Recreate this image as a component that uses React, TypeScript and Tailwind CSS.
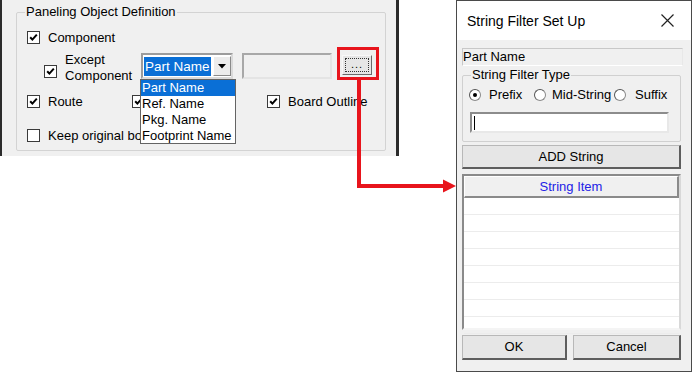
import React from "react";

function Check({ checked = true }: { checked?: boolean }) {
  return (
    <span className="inline-flex w-[13px] h-[13px] shrink-0 items-center justify-center border border-[#3a3a3a] bg-white">
      {checked && (
        <svg width="9" height="9" viewBox="0 0 9 9">
          <path d="M1.2 4.2 L3.4 6.6 L7.8 1.6" stroke="#000" strokeWidth="2" fill="none" />
        </svg>
      )}
    </span>
  );
}

function Radio({ checked = false }: { checked?: boolean }) {
  return (
    <span className="inline-flex w-[12px] h-[12px] shrink-0 items-center justify-center rounded-full border border-[#8a8a8a] border-t-[#555] border-l-[#555] bg-white">
      {checked && <span className="w-[4px] h-[4px] rounded-full bg-black" />}
    </span>
  );
}

export default function App() {
  return (
    <div className="relative w-[693px] h-[374px] bg-white overflow-hidden font-['Liberation_Sans',Arial,sans-serif] text-[13px] text-black flex items-start">
      {/* Left panel */}
      <div className="w-[399px] h-[156px] shrink-0 bg-[#f0f0f0] border-l-2 border-r-[3px] border-[#2b2b2b] pt-[12px] pl-[14px]">
        <div className="relative w-[370px] h-[139px] border border-[#d3d3d3] rounded-[2px]">
          <span className="absolute -top-[9px] left-[8px] bg-[#f0f0f0] px-[1px] leading-[16px]">Paneling Object Definition</span>
          <div className="flex flex-col pl-[10px] pt-[18px]">
            {/* Row 1 */}
            <div className="flex items-center h-[13px]">
              <Check />
              <span className="ml-[8px] leading-[16px]">Component</span>
            </div>
            {/* Row 2 */}
            <div className="flex items-start h-[26px] mt-[9px] pl-[17px]">
              <div className="mt-[9px]"><Check /></div>
              <div className="ml-[8px] w-[76px] -mt-[1px] leading-[16px]">
                <div>Except</div>
                <div>Component</div>
              </div>
              {/* Combo */}
              <div className="relative w-[92px] h-[26px] border-2 border-[#9c9c9c] border-b-[#dadada] border-r-[#dadada] bg-white flex items-center">
                <span className="ml-[1px] h-[19px] px-[1px] bg-[#0a6fd6] text-white leading-[19px] text-[13.5px]">Part Name</span>
                <span className="ml-auto w-[18px] h-[20px] bg-[#ececec] border border-[#fff] border-b-[#8a8a8a] border-r-[#8a8a8a] flex items-center justify-center">
                  <svg width="8" height="5" viewBox="0 0 8 5"><path d="M0 0 H8 L4 4.5 Z" fill="#000" /></svg>
                </span>
                {/* Dropdown list */}
                <div className="absolute left-[-3px] top-[24px] w-[96px] border border-[#646464] bg-white flex flex-col z-10 leading-[15.5px] text-[13px]">
                  <div className="bg-[#0a6fd6] text-white pl-[1px] h-[16px]">Part Name</div>
                  <div className="pl-[1px] h-[16px]">Ref. Name</div>
                  <div className="pl-[1px] h-[16px]">Pkg. Name</div>
                  <div className="pl-[1px] h-[15px]">Footprint Name</div>
                </div>
              </div>
              {/* Text field */}
              <div className="ml-[9px] w-[90px] h-[26px] border-2 border-[#a8a8a8] border-b-[#e4e4e4] border-r-[#e4e4e4] bg-[#f0f0f0]" />
              {/* ... button */}
              <div className="relative ml-[10px] mt-[2px] w-[30px] h-[20px]">
                <div className="w-full h-full bg-[#e6e6e6] border border-[#f8f8f8] border-b-[#6a6a6a] border-r-[#6a6a6a] p-[2px]">
                  <div className="w-full h-full border border-dotted border-[#333] flex items-center justify-center leading-none text-[11px] tracking-[1px] pb-[1px]">...</div>
                </div>
                <div className="absolute left-[-5px] top-[-8px] w-[42px] h-[33px] border-[3px] border-[#e8141c]" />
              </div>
            </div>
            {/* Row 3 */}
            <div className="flex items-center h-[13px] mt-[16px]">
              <div className="w-[105px] flex items-center">
                <Check />
                <span className="ml-[8px] leading-[16px]">Route</span>
              </div>
              <div className="w-[135px] flex items-center">
                <Check />
              </div>
              <div className="flex items-center">
                <Check />
                <span className="ml-[8px] leading-[16px]">Board Outline</span>
              </div>
            </div>
            {/* Row 4 */}
            <div className="flex items-center h-[13px] mt-[21px]">
              <Check checked={false} />
              <span className="ml-[8px] w-[92px] overflow-hidden whitespace-nowrap leading-[16px]">Keep original board</span>
            </div>
          </div>
        </div>
      </div>

      {/* Dialog */}
      <div className="ml-[57px] w-[236px] h-[372px] shrink-0 border border-[#4a4a4a] bg-[#f0f0f0] flex flex-col">
        <div className="h-[39px] bg-white flex items-center pl-[10px] pr-[17px]">
          <span className="text-[14px] leading-[18px]">String Filter Set Up</span>
          <svg className="ml-auto" width="13" height="13" viewBox="0 0 13 13">
            <path d="M0.5 0.5 L12.5 12.5 M12.5 0.5 L0.5 12.5" stroke="#222" strokeWidth="1.2" />
          </svg>
        </div>
        <div className="flex flex-col pl-[5px] pr-[9px]">
          <div className="mt-[8px] w-[221px] h-[18px] border border-[#c8c8c8] border-b-white border-r-[#e8e8e8] leading-[16px] text-[13px]">Part Name</div>
          {/* Group */}
          <div className="relative mt-[9px] w-[219px] h-[67px] border border-[#d0d0d0] rounded-[2px] flex flex-col">
            <span className="absolute -top-[9px] left-[8px] bg-[#f0f0f0] px-[1px] leading-[16px]">String Filter Type</span>
            <div className="flex items-center mt-[12px] pl-[6px] h-[13px]">
              <div className="w-[65px] flex items-center">
                <Radio checked />
                <span className="ml-[8px] leading-[16px]">Prefix</span>
              </div>
              <div className="w-[80px] flex items-center">
                <Radio />
                <span className="ml-[6px] leading-[16px]">Mid-String</span>
              </div>
              <div className="flex items-center">
                <Radio />
                <span className="ml-[9px] leading-[16px]">Suffix</span>
              </div>
            </div>
            <div className="mt-[11px] ml-[7px] w-[199px] h-[21px] border-2 border-[#8c8c8c] border-b-[#e8e8e8] border-r-[#e8e8e8] bg-white flex items-center pl-[2px]">
              <span className="w-[1px] h-[14px] bg-black" />
            </div>
          </div>
          {/* ADD String */}
          <div className="mt-[3px] w-[219px] h-[24px] bg-[#e6e6e6] border border-[#b8b8b8] border-b-2 border-r-2 border-b-[#5e5e5e] border-r-[#5e5e5e] flex items-center justify-center leading-[16px]">ADD String</div>
          {/* List */}
          <div className="mt-[5px] w-[219px] h-[156px] border-2 border-[#8a8a8a] border-b-[#f4f4f4] border-r-[#d8d8d8] bg-white flex flex-col">
            <div className="h-[22px] shrink-0 bg-[#f0f0f0] border-b-2 border-r-2 border-[#8a8a8a] border-t border-l border-t-white border-l-white flex items-center justify-center text-[#2323e6] leading-[16px]">String Item</div>
            {Array.from({ length: 8 }).map((_, i) => (
              <div key={i} className="h-[17px] shrink-0 border-b border-[#ececec]" />
            ))}
          </div>
          {/* OK / Cancel */}
          <div className="mt-[5px] flex gap-[6px]">
            <div className="w-[105px] h-[25px] bg-[#e6e6e6] border border-[#b8b8b8] border-b-2 border-r-2 border-b-[#5e5e5e] border-r-[#5e5e5e] flex items-center justify-center leading-[16px]">OK</div>
            <div className="w-[108px] h-[25px] bg-[#e6e6e6] border border-[#b8b8b8] border-b-2 border-r-2 border-b-[#5e5e5e] border-r-[#5e5e5e] flex items-center justify-center leading-[16px]">Cancel</div>
          </div>
        </div>
      </div>

      {/* Red arrow annotation */}
      <svg className="absolute left-0 top-0 pointer-events-none" width="693" height="374" viewBox="0 0 693 374">
        <path d="M359 80 V186 H446" stroke="#e8141c" strokeWidth="4" fill="none" />
        <path d="M443 179.5 L456 186 L443 192.5 Z" fill="#e8141c" />
      </svg>
    </div>
  );
}
